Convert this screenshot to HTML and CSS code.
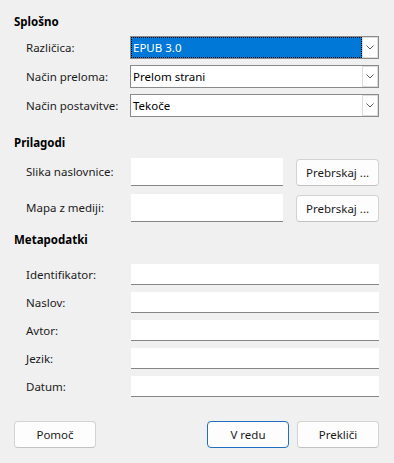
FILE: index.html
```html
<!DOCTYPE html>
<html lang="sl">
<head>
<meta charset="utf-8">
<title>EPUB</title>
<link rel="stylesheet" href="styles.css">
</head>
<body>
<div class="dialog">
  <section class="group group-general">
    <h2 class="group-title">Splošno</h2>
    <div class="form-grid combo-grid">
      <label class="field-label">Različica:</label>
      <div class="combo">
        <div class="combo-value selected"><span>EPUB 3.0</span></div>
        <div class="combo-button"><svg width="8" height="5" viewBox="0 0 8 5"><polyline points="0.5,0.5 4,4 7.5,0.5" fill="none" stroke="#606060" stroke-width="1"/></svg></div>
      </div>
      <label class="field-label">Način preloma:</label>
      <div class="combo">
        <div class="combo-value"><span>Prelom strani</span></div>
        <div class="combo-button"><svg width="8" height="5" viewBox="0 0 8 5"><polyline points="0.5,0.5 4,4 7.5,0.5" fill="none" stroke="#606060" stroke-width="1"/></svg></div>
      </div>
      <label class="field-label">Način postavitve:</label>
      <div class="combo">
        <div class="combo-value"><span>Tekoče</span></div>
        <div class="combo-button"><svg width="8" height="5" viewBox="0 0 8 5"><polyline points="0.5,0.5 4,4 7.5,0.5" fill="none" stroke="#606060" stroke-width="1"/></svg></div>
      </div>
    </div>
  </section>

  <section class="group group-custom">
    <h2 class="group-title">Prilagodi</h2>
    <div class="form-grid browse-grid">
      <label class="field-label">Slika naslovnice:</label>
      <div class="text-input tall"></div>
      <button class="btn browse">Prebrskaj ...</button>
      <label class="field-label">Mapa z mediji:</label>
      <div class="text-input tall"></div>
      <button class="btn browse">Prebrskaj ...</button>
    </div>
  </section>

  <section class="group group-meta">
    <h2 class="group-title">Metapodatki</h2>
    <div class="form-grid meta-grid">
      <label class="field-label">Identifikator:</label>
      <div class="text-input"></div>
      <label class="field-label">Naslov:</label>
      <div class="text-input"></div>
      <label class="field-label">Avtor:</label>
      <div class="text-input"></div>
      <label class="field-label">Jezik:</label>
      <div class="text-input"></div>
      <label class="field-label">Datum:</label>
      <div class="text-input"></div>
    </div>
  </section>

  <div class="button-bar">
    <button class="btn">Pomoč</button>
    <div class="spacer"></div>
    <button class="btn default">V redu</button>
    <button class="btn">Prekliči</button>
  </div>
</div>
</body>
</html>
```

FILE: styles.css
```css
html, body {
  margin: 0;
  padding: 0;
  background: #f0f0f0;
}

body {
  font-family: "Noto Sans", "Open Sans", sans-serif;
  font-size: 11.5px;
  color: #1b1b1b;
}

.dialog {
  padding: 14px 15px 0 14px;
  width: 365px;
}

.group-title {
  margin: 0;
  font-size: 11.5px;
  line-height: 16px;
  font-weight: bold;
  color: #000;
}

.form-grid {
  display: grid;
  padding-left: 12px;
  align-items: center;
}

.field-label {
  line-height: 16px;
  white-space: nowrap;
}

/* Splošno */
.combo-grid {
  grid-template-columns: 104px 249px;
  row-gap: 6px;
  margin-top: 6px;
}

.combo {
  display: flex;
  height: 23px;
  box-sizing: border-box;
  border: 1px solid #8a8a8a;
  background: #fff;
}

.combo-value {
  flex: 1;
  display: flex;
  align-items: center;
  padding-left: 2px;
  line-height: 16px;
  color: #000;
}

.combo-value.selected {
  background: #0078d7;
  color: #fff;
  outline: 1px dotted #000;
  outline-offset: -1px;
}

.combo-button {
  width: 16px;
  box-sizing: border-box;
  border: 1px solid #dcdcdc;
  background: #fff;
  display: flex;
  align-items: center;
  justify-content: center;
}

/* Prilagodi */
.group-custom {
  margin-top: 18px;
}

.browse-grid {
  grid-template-columns: 104px 152px 97px;
  row-gap: 8px;
  margin-top: 7px;
}

.browse-grid .text-input {
  width: 152px;
}

.browse-grid .browse {
  margin-left: 14px;
}

.text-input {
  height: 21px;
  box-sizing: border-box;
  background: #fff;
  border-bottom: 1px solid #868686;
  margin-left: 1px;
}

.text-input.tall {
  height: 28px;
}

/* Metapodatki */
.group-meta {
  margin-top: 10px;
}

.meta-grid {
  grid-template-columns: 104px 248px;
  row-gap: 7px;
  margin-top: 16px;
}

.meta-grid .text-input {
  width: 248px;
}

/* buttons */
.btn {
  font-family: inherit;
  font-size: 11.5px;
  color: #1b1b1b;
  height: 27px;
  width: 82px;
  box-sizing: border-box;
  padding: 0;
  background: #fdfdfd;
  border: 1px solid #d3d3d3;
  border-bottom-color: #c2c2c2;
  border-radius: 4px;
}

.btn.default {
  border: 1px solid #1f6fc5;
}

.browse {
  width: 83px;
}

.button-bar {
  display: flex;
  gap: 8px;
  margin-top: 24px;
}

.spacer {
  flex: 1;
}
```
